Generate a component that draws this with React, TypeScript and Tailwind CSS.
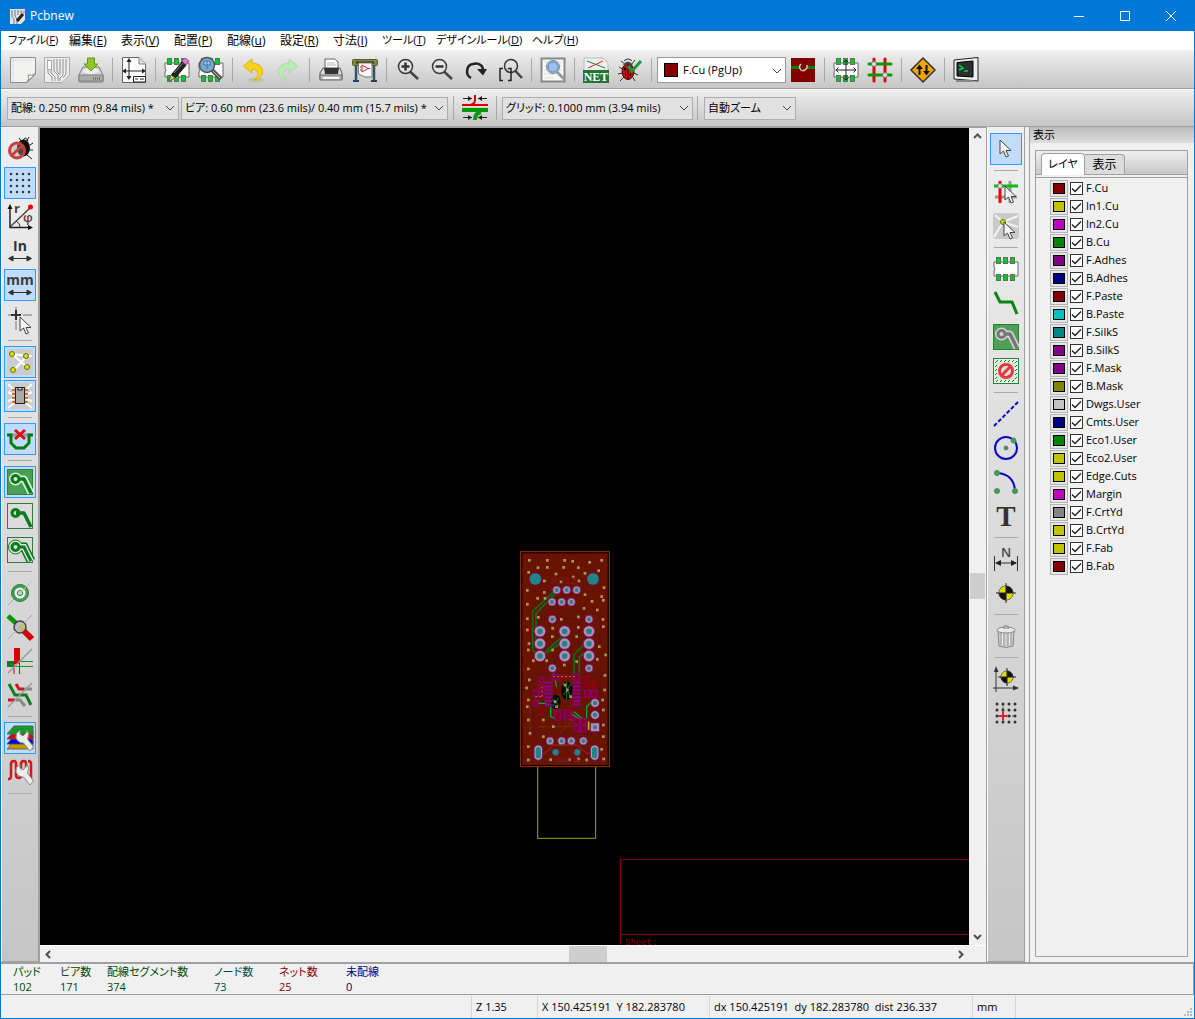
import type { ReactNode } from "react";

const ARROW = "M0 0V14L3.5 11L6 17L8.5 16L6 10.5H11Z";

function Cursor({ x, y }: { x: number; y: number }) {
  return <path d={ARROW} transform={`translate(${x} ${y})`} fill="#f4f4f4" stroke="#444" />;
}

// footprint body with three pads on each side
function Chip() {
  return (
    <>
      <path d="M1 6H25V20H1V15Q3 13 1 11Z" fill="#fff" stroke="#666" />
      {[4, 11, 18].map((x) => (
        <g key={x} fill="#00c832" stroke="#557755">
          <rect x={x - 0.5} y="1.5" width="4" height="6" />
          <rect x={x - 0.5} y="18.5" width="4" height="6" />
        </g>
      ))}
    </>
  );
}

function Target({ x = 13, y = 13, r = 8 }: { x?: number; y?: number; r?: number }) {
  return (
    <g transform={`translate(${x} ${y})`}>
      <circle r={r} fill="#111" stroke="#222" />
      <path d={`M0 0H${-r}A${r} ${r} 0 0 1 0 ${-r}ZM0 0H${r}A${r} ${r} 0 0 1 0 ${r}Z`} fill="#dcdc00" />
      <path d={`M${-r - 3} 0H${r + 3}M0 ${-r - 3}V${r + 3}`} stroke="#222" />
    </g>
  );
}

function Lens({ children }: { children?: ReactNode }) {
  return (
    <>
      <path d="M15 14.500L23 22" stroke="#444" strokeWidth="2.500" />
      <circle cx="10.500" cy="9.500" r="7" fill="#e8e8e8" fillOpacity="0.5" stroke="#383838" strokeWidth="1.500" />
      {children}
    </>
  );
}

function Wrench() {
  return (
    <path
      d="M13 5V9L16 11L19 8L20 5Q23 9 20.500 14L26.500 22L23 26L16.500 18Q11 18 9 13Q8 8 13 5Z"
      fill="#ececec"
      stroke="#888"
    />
  );
}

function ZoneTrack({ bg, halo, core, outline }: { bg: string; halo: string; core: string; outline: string }) {
  return (
    <>
      <rect x="0.5" y="0.5" width="25" height="25" fill={bg} stroke={outline} />
      <path d="M9 10H17L24 24" fill="none" stroke={halo} strokeWidth="7" strokeLinejoin="round" />
      <circle cx="8.500" cy="10" r="6.500" fill={halo} />
      <path d="M9 10H17L24 24" fill="none" stroke={core} strokeWidth="3.500" strokeLinejoin="round" />
      <circle cx="8.500" cy="10" r="3.500" fill={halo} stroke={core} strokeWidth="3" />
    </>
  );
}

const measure = (
  <path d="M2 20.500H24M6 18L1.500 20.500L6 23ZM20 18L24.500 20.500L20 23Z" fill="#333" stroke="#333" />
);

const icons: Record<string, ReactNode> = {
  new: (
    <>
      <path d="M.5 .5H25.500V17L17 25.500H.5Z" fill="#f1f1ef" stroke="#8c8c8c" />
      <path d="M3 1V25M1 3H25" stroke="#ccc" strokeDasharray="1 1" />
      <path d="M25 17L17 25Q20 22 18 18Q22 19 25 17Z" fill="#fff" stroke="#888" />
    </>
  ),
  open: (
    <>
      <path d="M.5 .5H25.500V18L18 25.500H.5Z" fill="#eee" stroke="#aaa" />
      <path d="M4 2V16L8 20V24M7 12V16L11 20V24M10 2V14L14 18V24M13 2V14L15 17M16 2V18M19 2V18L16 21V24M22 2V17L19 21" fill="none" stroke="#8e8e8e" />
      <rect x="3.500" y="3.500" width="4" height="9" fill="#fff" stroke="#aaa" />
    </>
  ),
  save: (
    <>
      <path d="M5 10H21L25 18V24Q25 25 24 25H2Q1 25 1 24V18Z" fill="#d5d5d5" stroke="#777" />
      <path d="M1 18H25V24H1Z" fill="#ababab" stroke="#808080" />
      <path d="M15 21.500H23" stroke="#666" strokeWidth="2" strokeDasharray="1 1" />
      <ellipse cx="13" cy="14" rx="8" ry="3" fill="#eee" />
      <path d="M9.500 1H16.500V7H20L13 14L6 7H9.500Z" fill="#92c42c" stroke="#649a10" />
    </>
  ),
  pagesettings: (
    <>
      <path d="M1.500 .5H18L24.500 7V25.500H1.500Z" fill="#fcfcfc" stroke="#666" />
      <path d="M18 .5V7H24.500" fill="#ddd" stroke="#888" />
      <path d="M8 3V21M3 14H23" stroke="#222" />
      <path d="M8 1L5.500 5H10.500ZM8 23L5.500 19H10.500ZM1 14L5 11.500V16.500ZM25 14L21 11.500V16.500Z" fill="#222" />
      <path d="M12.500 19.500H24.500V25H12.500ZM14 22H17M19 22H23" fill="#fff" stroke="#222" />
    </>
  ),
  modedit: (
    <>
      <Chip />
      <path d="M5 23L8 17L19 4L23 7L12 20Z" fill="#222" stroke="#111" />
      <path d="M5 24L7 18L11 21Z" fill="#f0d060" stroke="#665" />
      <path d="M18 4L21 1L25 4L22 8Z" fill="#d77bc5" stroke="#a0528f" />
      <path d="M10 16L19 6" stroke="#888" />
    </>
  ),
  modview: (
    <>
      <Chip />
      <path d="M14 13L23 22" stroke="#555" strokeWidth="4" />
      <path d="M14 13L22 21" stroke="#bbb" />
      <circle cx="9" cy="8" r="7.500" fill="#79a9cf" stroke="#555" strokeWidth="1.500" />
      <path d="M6 4H12V8H6ZM9 4V12" fill="#a8cbe5" stroke="#3c77a8" />
    </>
  ),
  undo: (
    <>
      <ellipse cx="15" cy="23" rx="8" ry="2" fill="#c4c09e" />
      <path d="M2.500 9L11 2V6C18 6 22.500 11 21.500 16C20.500 20 17 22.500 13 23C16.500 20 17.500 17 16 14.500C15 12.500 13 12 11 12V16Z" fill="#f8d21c" stroke="#dcb008" />
    </>
  ),
  redo: (
    <path d="M22.500 9L14 2V6C7 6 2.500 11 3.500 16C4.500 20 8 22.500 12 23C8.500 20 7.500 17 9 14.500C10 12.500 12 12 14 12V16Z" fill="#bfe8b8" stroke="#a9d8a2" />
  ),
  print: (
    <>
      <path d="M7 12V2H17L20 5V12" fill="#fafafa" stroke="#666" />
      <path d="M9 6H17M9 8H18" stroke="#bbb" />
      <path d="M5 11H22L24 16V22H2V16Z" fill="#ddd" stroke="#555" />
      <path d="M6 11H21L20 17H7Z" fill="#333" />
      <path d="M2 18H24V23H2Z" fill="#b8b8b8" stroke="#666" />
      <path d="M5 21H21" stroke="#f4f4f4" strokeWidth="2" />
    </>
  ),
  plot: (
    <>
      <path d="M4 7V24M22 7V24" stroke="#34506e" strokeWidth="2.500" />
      <path d="M1 24H7M19 24H25" stroke="#24405e" strokeWidth="2" />
      <rect x="0.500" y="2.500" width="25" height="6" rx="1" fill="#858543" stroke="#5d5d2c" />
      <path d="M4 5.500H22" stroke="#34340c" strokeWidth="2" />
      <path d="M6.500 6H20V20H13L6.500 17Z" fill="#f8f8f8" stroke="#777" />
      <path d="M10 8V15L16 11.500ZM8 10H10M8 13H10M16 11.500H18" fill="none" stroke="#c03030" />
    </>
  ),
  zoomin: <Lens><path d="M6.500 9.500H14.500M10.500 5.500V13.500" stroke="#333" strokeWidth="2.500" /></Lens>,
  zoomout: <Lens><path d="M6.500 9.500H14.500" stroke="#333" strokeWidth="2.500" /></Lens>,
  redraw: (
    <>
      <path d="M8 21C2 18 3 8 10 7C16 5 20 9 20 13" fill="none" stroke="#222" strokeWidth="2.500" />
      <path d="M14 12H24L20 18.500Z" fill="#222" />
    </>
  ),
  zoomfit: (
    <>
      <path d="M18 13.500L25 21" stroke="#444" strokeWidth="2.500" />
      <circle cx="14" cy="9" r="6.500" fill="none" stroke="#383838" strokeWidth="1.500" />
      <path d="M6 11.500H3V23.500H6M11 11.500H14V23.500H11" fill="none" stroke="#222" strokeWidth="1.500" />
    </>
  ),
  find: (
    <>
      <rect x="1.500" y="1.500" width="23" height="23" fill="#f8f8f8" stroke="#888" strokeWidth="2" />
      <path d="M4 5H22M4 9H22M4 13H22M4 17H14M4 21H14" stroke="#ddd" />
      <path d="M17 15L24 22" stroke="#999" strokeWidth="3" />
      <circle cx="13" cy="10" r="6.500" fill="#9dbfe8" stroke="#888" />
      <circle cx="13" cy="10" r="5" fill="none" stroke="#5d8fd0" />
    </>
  ),
  netlist: (
    <>
      <path d="M1 1H20L25 6V14H1Z" fill="#eee" stroke="#bbb" />
      <path d="M4 4L22 11" stroke="#208030" />
      <path d="M5 11L20 4" stroke="#c03030" />
      <rect y="13" width="26" height="13" fill="#257532" />
      <text x="13" y="24" textAnchor="middle" fontFamily="Liberation Serif" fontSize="12" fontWeight="bold" fill="#fff">NET</text>
    </>
  ),
  drc: (
    <>
      <path d="M4 4L9 8M18 3L14 8M2 10L7 13M1 17L6 16M3 24L8 19M18 24L15 19M21 18L15 15M7 4Q11 0 15 4" fill="none" stroke="#333" />
      <ellipse cx="11" cy="14.500" rx="6" ry="8" fill="#c00c12" stroke="#500" />
      <path d="M6 8Q11 1 16 8Z" fill="#444" />
      <path d="M11 7V22" stroke="#400" />
      <path d="M7 12H9M8 17H9M13 18H14M13 12H14" stroke="#200" strokeWidth="2.500" />
      <path d="M11 9L15 14L24 4" fill="none" stroke="#169a36" strokeWidth="3" />
    </>
  ),
  layerpair: (
    <>
      <rect x="1" y="1" width="24" height="24" fill="#840000" />
      <path d="M1 10.500H9M17 10.500H25" stroke="#008400" strokeWidth="3" />
      <path d="M11 7Q8 10 11 13Q14 15 17 11V8" fill="none" stroke="#ccc" strokeWidth="1.500" />
    </>
  ),
  footprintmode: (
    <>
      <Chip />
      <path d="M13 3V23M3 13H23M10.500 5.500L13 3L15.500 5.500M10.500 20.500L13 23L15.500 20.500M5.500 10.500L3 13L5.500 15.500M20.500 10.500L23 13L20.500 15.500" fill="none" stroke="#222" />
    </>
  ),
  trackmode: (
    <>
      <path d="M7 2V24M18 2V24" stroke="#e00008" strokeWidth="3" strokeLinecap="round" />
      <path d="M2 7H24M2 18H24" stroke="#009a00" strokeWidth="3" strokeLinecap="round" />
      <circle cx="7" cy="7" r="2.500" fill="#ddd" stroke="#777" />
      <circle cx="18" cy="18" r="2.500" fill="#ddd" stroke="#777" />
    </>
  ),
  autoroute: (
    <>
      <path d="M13 1L25 13L13 25L1 13Z" fill="#f2a60c" stroke="#333" strokeWidth="1.500" strokeLinejoin="round" />
      <path d="M9.500 18V10M16.500 8V16" stroke="#111" strokeWidth="2" />
      <path d="M6 12L9.500 7.500L13 12ZM13 14H20L16.500 18.500Z" fill="#111" />
    </>
  ),
  console: (
    <>
      <path d="M1 3L25 .5V24L1 22Z" fill="#eee" stroke="#222" />
      <path d="M4 5.500L20 4V20L4 19Z" fill="#283030" stroke="#000" />
      <path d="M6 8L10 11L6 13M11 14H15" fill="none" stroke="#00d840" strokeWidth="1.500" />
      <path d="M3 24H20" stroke="#888" strokeWidth="2" />
    </>
  ),
  tracksize: (
    <>
      <path d="M0 10H26" stroke="#e00000" strokeWidth="2" />
      <path d="M13 0V5Q13 9 8 10" fill="none" stroke="#e00000" strokeWidth="2" />
      <path d="M0 15H26" stroke="#009a00" strokeWidth="4" />
      <path d="M19 17Q13 18 13 25" fill="none" stroke="#009a00" strokeWidth="4" />
      <path d="M1 3.500H10M16 3.500H25M1 22.500H10M16 22.500H25" stroke="#222" />
      <path d="M6 1L10 3.500L6 6ZM20 1L16 3.500L20 6ZM6 20L10 22.500L6 25ZM20 20L16 22.500L20 25Z" fill="#222" />
    </>
  ),
  drcoff: (
    <>
      <path d="M12 2L15 6M22 1L19 6M23 9L26 7M22 14H26M20 19L25 23M16 5Q18 -1 21 5" fill="none" stroke="#222" />
      <ellipse cx="16.500" cy="12" rx="6.500" ry="8.500" fill="#111" />
      <circle cx="10" cy="14.500" r="7.500" fill="#999" fillOpacity="0.400" stroke="#c84040" strokeWidth="3" />
      <path d="M5 19L15 10" stroke="#c84040" strokeWidth="3" />
    </>
  ),
  grid: (
    <>
      {[4, 10, 16, 22].map((y) => (
        <path key={y} d={`M4 ${y}h.010M10 ${y}h.010M16 ${y}h.010M22 ${y}h.010`} stroke="#303840" strokeWidth="2.500" strokeLinecap="round" />
      ))}
    </>
  ),
  polar: (
    <>
      <path d="M3 23L24 3" stroke="#544" strokeWidth="1.500" />
      <path d="M3 4V23.500H23" fill="none" stroke="#222" strokeWidth="1.500" />
      <path d="M3 0L.5 5H5.500ZM26 23.500L21 21V26Z" fill="#111" />
      <path d="M9 17Q13 19 13 23" fill="none" stroke="#333" />
      <circle cx="23.500" cy="3" r="2.500" fill="#f00000" />
      <text x="7" y="9" fontFamily="Open Sans" fontSize="13" fontWeight="bold" fill="#54403c">r</text>
      <text x="16" y="18" fontFamily="Open Sans" fontSize="13" fontWeight="600" fill="#54403c">φ</text>
    </>
  ),
  inch: (
    <>
      <text x="13" y="13" textAnchor="middle" fontFamily="Open Sans" fontSize="14" fontWeight="bold" fill="#333">In</text>
      {measure}
    </>
  ),
  mm: (
    <>
      <text x="13" y="13" textAnchor="middle" fontFamily="Open Sans" fontSize="14" fontWeight="bold" fill="#3c3c3c">mm</text>
      {measure}
    </>
  ),
  cross: (
    <>
      <path d="M9 1V5M9 15V24M1 9H4M16 9H25" stroke="#999" strokeWidth="1.500" />
      <path d="M9 4V14M4 9H14" stroke="#333" strokeWidth="2" />
      <Cursor x={13} y={11} />
    </>
  ),
  ratsnest: (
    <>
      <rect width="26" height="26" rx="3" fill="#ccc" />
      <path d="M5 5L20 18M20 7L7 21M5 5L20 7H25" stroke="#fff" strokeWidth="2" />
      {["5 5", "19 7", "6 21", "20 18"].map((p) => (
        <circle key={p} r="2.500" transform={`translate(${p})`} fill="#d8e000" stroke="#6a7010" />
      ))}
    </>
  ),
  modratsnest: (
    <>
      <rect width="26" height="26" rx="3" fill="#ccc" />
      <path d="M7 7L1 1M7 12L1 9M7 16L1 18M7 20L1 25M19 7L25 1M19 12L25 9M19 16L25 18M19 20L25 25" stroke="#fff" strokeWidth="2" />
      <path d="M5 7H21M5 11H21M5 15H21M5 19H21" stroke="#d87030" strokeWidth="2" />
      <rect x="8.500" y="4.500" width="9" height="16" fill="#aaa" stroke="#222" />
      <path d="M11 5V7H15V5" fill="#ddd" stroke="#111" />
    </>
  ),
  autodelete: (
    <>
      <path d="M1 9H25" stroke="#999" strokeWidth="3" />
      <path d="M0 9H4V17L9 22H17L22 17V9H26" fill="none" stroke="#007c10" strokeWidth="3" />
      <path d="M8 4L18 13M18 4L8 13" stroke="#d80c14" strokeWidth="3" />
    </>
  ),
  zones: <ZoneTrack bg="#4a9f57" halo="#d8eedb" core="#087c18" outline="#2b8138" />,
  zonesoff: <ZoneTrack bg="transparent" halo="transparent" core="#087c18" outline="#2b8138" />,
  zonesoutline: (
    <>
      <rect x="0.500" y="0.500" width="25" height="25" fill="none" stroke="#2b8138" />
      <path d="M9 10H17L24 24" fill="none" stroke="#087c18" strokeWidth="9" />
      <circle cx="8.500" cy="10" r="7" fill="#e0e0e0" stroke="#087c18" />
      <path d="M9 10H17L24 24" fill="none" stroke="#e0e0e0" strokeWidth="6" />
      <path d="M9 10H17L24 24" fill="none" stroke="#087c18" strokeWidth="3" />
      <circle cx="8.500" cy="10" r="3.500" fill="#ddd" stroke="#087c18" strokeWidth="3" />
    </>
  ),
  via: (
    <>
      <path d="M1 25L25 1" stroke="#aaa" />
      <circle cx="13" cy="13" r="8.500" fill="#4a9f57" stroke="#2b8138" />
      <path d="M13 13m-3 5A6 6 0 1 1 18 10" fill="none" stroke="#3a9347" />
      <circle cx="13" cy="13" r="4.500" fill="#ddd" stroke="#e8f4e8" strokeWidth="2" />
      <circle cx="13" cy="13" r="2.500" fill="#ddd" stroke="#208030" />
      <path d="M12 14L25 1" stroke="#bbb" />
    </>
  ),
  viaoutline: (
    <>
      <path d="M1 2L10 10" stroke="#009a00" strokeWidth="5" />
      <path d="M15 15L25 25" stroke="#d80008" strokeWidth="6" />
      <circle cx="13" cy="13" r="6" fill="#bbb" fillOpacity="0.900" stroke="#444" strokeWidth="1.500" />
      <path d="M12 14L16 11V16Z" fill="#d8cc00" />
      <path d="M1 25L25 1" stroke="#aaa" />
    </>
  ),
  trackoutline: (
    <>
      <path d="M10 0V16" stroke="#d80008" strokeWidth="6" />
      <path d="M7 16V26M12.500 16V26" stroke="#d80008" />
      <path d="M0 16H7" stroke="#078020" strokeWidth="6" />
      <path d="M13 13.500H26M7 18.500H26" stroke="#209030" />
      <path d="M1 25L25 1" stroke="#999" strokeWidth="1.500" />
    </>
  ),
  highcontrast: (
    <>
      <path d="M9 2L12 7H17M1 18H8" fill="none" stroke="#c81820" strokeWidth="3" />
      <path d="M17 7H25M9 18H13L18 24" stroke="#888" strokeWidth="3" />
      <path d="M2 2L8 13H19L24 23" fill="none" stroke="#107c20" strokeWidth="3" />
      <path d="M1 25L25 1" stroke="#999" strokeWidth="1.500" />
    </>
  ),
  layers: (
    <>
      <path d="M7 16H26V24H0Z" fill="#c89800" stroke="#665" />
      <path d="M7 11H26V19H0Z" fill="#0000d8" stroke="#556" />
      <path d="M7 6H26V14H0Z" fill="#e00010" stroke="#655" />
      <path d="M7 1H26V9H0Z" fill="#159a28" stroke="#565" />
      <Wrench />
    </>
  ),
  microwave: (
    <>
      <path d="M1 20H2Q4 20 4 17V5Q4 2 7 2Q9 2 9 5V16Q9 19 12 19Q14 19 14 16V5Q14 2 17 2Q19 2 19 5V16M24 20V5Q24 2 21 2" fill="none" stroke="#d01818" strokeWidth="2.500" />
      <Wrench />
    </>
  ),
  select: <Cursor x={7} y={4} />,
  highlight: (
    <>
      <path d="M17 2V24M2 18H24" stroke="#999" strokeWidth="3" />
      <path d="M7 2V24" stroke="#f00008" strokeWidth="3" />
      <path d="M1 7H25" stroke="#00c010" strokeWidth="3" />
      <circle cx="7" cy="7" r="2.500" fill="#ddd" stroke="#777" />
      <Cursor x={12} y={7} />
    </>
  ),
  localrats: (
    <>
      <rect width="26" height="26" rx="3" fill="#c9c9c9" />
      <path d="M10 9L2 2M10 9L25 3M10 9L1 24M10 9L25 14" stroke="#f4f4f4" strokeWidth="2" />
      <circle cx="10" cy="9" r="2.500" fill="#d8e000" stroke="#667010" />
      <Cursor x={11} y={9} />
    </>
  ),
  chip: <Chip />,
  track: <path d="M2 2L7 12H19L24 24" fill="none" stroke="#078510" strokeWidth="3" />,
  addzone: <ZoneTrack bg="#4f9f58" halo="#d4d4d4" core="#777" outline="#18872c" />,
  keepout: (
    <>
      <rect x="0.500" y="0.500" width="25" height="25" fill="#e8f4e8" stroke="#2b8138" />
      <path d="M2 5L5 2M2 9L9 2M2 13L13 2M2 17L17 2M2 21L21 2M3 24L24 3M7 24L24 7M11 24L24 11M15 24L24 15M19 24L24 19" stroke="#087c18" />
      <rect x="4" y="4" width="18" height="18" fill="#ddd" />
      <circle cx="13" cy="13" r="6.500" fill="#ddd" stroke="#e03c40" strokeWidth="3" />
      <path d="M9 17L17 9" stroke="#e03c40" strokeWidth="3" />
    </>
  ),
  line: <path d="M1 25L25 1" stroke="#0808d0" strokeWidth="2" strokeDasharray="4 2" />,
  circle: (
    <>
      <circle cx="13" cy="13" r="11" fill="none" stroke="#0808c8" strokeWidth="2" />
      <circle cx="13" cy="13" r="2" fill="#28b038" stroke="#678" />
      <circle cx="20.500" cy="5.500" r="2.500" fill="#28b038" stroke="#678" />
    </>
  ),
  arc: (
    <>
      <path d="M4 4Q21 5 22 22" fill="none" stroke="#0808c8" strokeWidth="2" />
      <circle cx="4" cy="4" r="2.500" fill="#28b038" stroke="#676" />
      <circle cx="4" cy="22" r="2.500" fill="#28b038" stroke="#676" />
      <circle cx="22" cy="22" r="2.500" fill="#28b038" stroke="#676" />
    </>
  ),
  text: <text x="13" y="23" textAnchor="middle" fontFamily="Liberation Serif" fontSize="29" fontWeight="bold" fill="#333">T</text>,
  dimension: (
    <>
      <path d="M1.500 10V25M24.500 10V25M3 17H23" stroke="#333" />
      <path d="M2 17L8 14V20ZM24 17L18 14V20Z" fill="#222" />
      <text x="13" y="11" textAnchor="middle" fontFamily="Open Sans" fontSize="13" fontWeight="600" fill="#444">N</text>
    </>
  ),
  mire: <Target r={7} />,
  trash: (
    <>
      <path d="M5 8H21L20 23Q13 26 6 23Z" fill="#ccc" stroke="#888" />
      <path d="M8 10V22M11 10V23M15 10V23M18 10V22" stroke="#999" />
      <path d="M9.500 10V22M16.500 10V22" stroke="#eee" />
      <ellipse cx="13" cy="7" rx="9" ry="3" fill="#eaeaea" stroke="#888" />
      <path d="M10 5Q13 0 16 5Z" fill="#ddd" stroke="#777" />
    </>
  ),
  offset: (
    <>
      <path d="M3 3V26M0 22H24" stroke="#333" />
      <path d="M3 0L1 6H5.500ZM26 22L20 19.500V24.500Z" fill="#333" />
      <Target x={14} y={11} r={6} />
    </>
  ),
  gridorigin: (
    <>
      <path d="M10 4V22M4 16H22" stroke="#555" strokeDasharray="2 1" />
      {[4, 10, 16, 22].map((y) => (
        <path key={y} d={`M4 ${y}h.010M10 ${y}h.010M16 ${y}h.010M22 ${y}h.010`} stroke="#333" strokeWidth="3" strokeLinecap="round" />
      ))}
      <path d="M10 12V20M6 16H14" stroke="#e02028" strokeWidth="2" />
    </>
  ),
};

function ToolButton({ name, active }: { name: string; active?: boolean }) {
  return (
    <button
      aria-label={name}
      className={`m-px flex size-8 shrink-0 items-center justify-center border ${
        active ? "border-[#3399ff] bg-[#c0dcf8]" : "border-transparent"
      }`}
    >
      <svg className="overflow-visible" width="26" height="26" viewBox="0 0 26 26" fill="none">
        {icons[name]}
      </svg>
    </button>
  );
}

function HSep() {
  return <div className="mx-1 h-6 w-px shrink-0 bg-[#a8a8a8]" />;
}

function TopGroup({ names, last }: { names: string[]; last?: boolean }) {
  return (
    <>
      {names.map((name) => (
        <ToolButton key={name} name={name} />
      ))}
      {!last && <HSep />}
    </>
  );
}

function SideTools({ groups, active, trailing }: { groups: string[][]; active: string[]; trailing?: boolean }) {
  return (
    <>
      {groups.map((group, i) => (
        <div key={group[0]} className="flex flex-col items-center">
          {group.map((name) => (
            <ToolButton key={name} name={name} active={active.includes(name)} />
          ))}
          {(trailing || i < groups.length - 1) && <div className="my-1 h-px w-6 bg-[#a8a8a8]" />}
        </div>
      ))}
    </>
  );
}

function Chevron({ className }: { className: string }) {
  return (
    <svg className={className} width="10" height="6" viewBox="0 0 10 6" fill="none">
      <path d="M1 1L5 5L9 1" stroke="#444" />
    </svg>
  );
}

function Combo({ label, value, className }: { label: string; value: string; className: string }) {
  return (
    <div className={`relative h-[23px] shrink-0 ${className}`}>
      <select
        aria-label={label}
        className="block h-full w-full appearance-none border border-[#adadad] bg-[#e1e1e1] pr-4 pl-[3px] text-[11px] text-black"
      >
        <option>{value}</option>
      </select>
      <Chevron className="pointer-events-none absolute top-2 right-1" />
    </div>
  );
}

const menus = [
  { label: "ファイル", hot: "F", width: "w-[61px] text-[11px]" },
  { label: "編集", hot: "E", width: "w-[52px] text-xs" },
  { label: "表示", hot: "V", width: "w-[53px] text-xs" },
  { label: "配置", hot: "P", width: "w-[53px] text-xs" },
  { label: "配線", hot: "u", width: "w-[53px] text-xs" },
  { label: "設定", hot: "R", width: "w-[53px] text-xs" },
  { label: "寸法", hot: "I", width: "w-[49px] text-xs" },
  { label: "ツール", hot: "T", width: "w-[54px] text-[11px]" },
  { label: "デザインルール", hot: "D", width: "w-[96px] text-[11px]" },
  { label: "ヘルプ", hot: "H", width: "w-[60px] text-[11px]" },
];

const leftGroups = [
  ["drcoff", "grid", "polar", "inch", "mm", "cross"],
  ["ratsnest", "modratsnest"],
  ["autodelete"],
  ["zones", "zonesoff", "zonesoutline"],
  ["via", "viaoutline", "trackoutline", "highcontrast"],
  ["layers", "microwave"],
];

const rightGroups = [
  ["select"],
  ["highlight", "localrats"],
  ["chip", "track", "addzone", "keepout"],
  ["line", "circle", "arc", "text"],
  ["dimension", "mire"],
  ["trash"],
  ["offset", "gridorigin"],
];

const layers = [
  { name: "F.Cu", color: "bg-[#840000]" },
  { name: "In1.Cu", color: "bg-[#c2c200]" },
  { name: "In2.Cu", color: "bg-[#c200c2]" },
  { name: "B.Cu", color: "bg-[#008400]" },
  { name: "F.Adhes", color: "bg-[#840084]" },
  { name: "B.Adhes", color: "bg-[#000084]" },
  { name: "F.Paste", color: "bg-[#840000]" },
  { name: "B.Paste", color: "bg-[#00c2c2]" },
  { name: "F.SilkS", color: "bg-[#008484]" },
  { name: "B.SilkS", color: "bg-[#840084]" },
  { name: "F.Mask", color: "bg-[#840084]" },
  { name: "B.Mask", color: "bg-[#848400]" },
  { name: "Dwgs.User", color: "bg-[#c2c2c2]" },
  { name: "Cmts.User", color: "bg-[#000084]" },
  { name: "Eco1.User", color: "bg-[#008400]" },
  { name: "Eco2.User", color: "bg-[#c2c200]" },
  { name: "Edge.Cuts", color: "bg-[#c2c200]" },
  { name: "Margin", color: "bg-[#c200c2]" },
  { name: "F.CrtYd", color: "bg-[#848484]" },
  { name: "B.CrtYd", color: "bg-[#c2c200]" },
  { name: "F.Fab", color: "bg-[#c2c200]" },
  { name: "B.Fab", color: "bg-[#840000]" },
];

const stats = [
  { label: "パッド", value: "102", style: "w-[47px] text-[#004800]" },
  { label: "ビア数", value: "171", style: "w-[47px] text-[#004800]" },
  { label: "配線セグメント数", value: "374", style: "w-[107px] text-[#004800]" },
  { label: "ノード数", value: "73", style: "w-[65px] text-[#004848]" },
  { label: "ネット数", value: "25", style: "w-[67px] text-[#840000]" },
  { label: "未配線", value: "0", style: "w-[67px] text-[#000084]" },
];

const vias = [
  [58, 61], [112, 61], [164, 61], [188, 64], [239, 67], [275, 61], [56, 97], [84, 83], [112, 82], [161, 82],
  [205, 83], [138, 102], [190, 111], [225, 100], [266, 92], [103, 123], [153, 126], [207, 123], [282, 143],
  [52, 151], [103, 157], [225, 164], [275, 170], [83, 175], [105, 175], [246, 184], [280, 181], [52, 193],
  [222, 205], [52, 236], [262, 210], [279, 238], [85, 232], [154, 238], [205, 231], [280, 260], [52, 270],
  [128, 265], [205, 262], [57, 311], [127, 290], [200, 290], [268, 320], [287, 345], [55, 330], [128, 330],
  [55, 387], [70, 362], [110, 362], [163, 375], [200, 365], [262, 358], [285, 406], [58, 420], [50, 444],
  [55, 480], [284, 450], [278, 480], [52, 500], [280, 510], [55, 540], [100, 540], [130, 560], [60, 580],
  [100, 590], [280, 555], [280, 590], [55, 620], [55, 660], [122, 659], [178, 659], [205, 657], [230, 660],
  [275, 628], [281, 657], [172, 450], [182, 470], [135, 485], [140, 500], [165, 435],
];

const pads = [
  [140, 150, 12], [170, 150, 12], [200, 150, 12], [126, 186, 12], [155, 186, 12], [184, 186, 12],
  [127, 238, 12], [237, 238, 12], [90, 274, 17], [164, 274, 17], [237, 274, 17], [90, 311, 17], [164, 311, 17],
  [237, 311, 17], [90, 348, 17], [164, 348, 17], [237, 348, 17], [127, 385, 12], [237, 385, 12],
  [255, 489, 13], [255, 525, 13], [120, 603, 12], [155, 603, 12], [184, 603, 12], [220, 603, 12],
];

const smd = [
  [70, 450, 15, 18], [70, 480, 15, 18], [88, 412, 14, 14], [88, 434, 14, 14], [88, 456, 14, 14],
  [134, 510, 18, 30], [164, 510, 22, 30], [192, 535, 16, 18], [212, 535, 16, 18], [192, 558, 16, 18],
  [212, 558, 16, 18], [224, 450, 16, 22], [244, 452, 16, 20], [126, 404, 20, 16], [188, 404, 20, 16],
];

function Board() {
  return (
    <svg className="absolute inset-0 h-full w-full" fill="none">
      <g transform="translate(470 412) scale(0.3333)">
        <rect x="83" y="672" width="174" height="223" stroke="#a0a000" strokeWidth="3" />
        <rect x="32" y="35" width="266" height="645" fill="#100000" stroke="#983400" strokeWidth="3" />
        <rect x="37" y="40" width="256" height="635" fill="#6a1400" />
        <g stroke="#5c1020" strokeWidth="3">
          <path d="M75 45H250V155H75ZM110 155V200M90 290V235L120 205H180L205 240V380M70 235H240M110 385L150 350L180 385H240M140 165V200M215 190L235 240M270 230V330M70 400H270V580H70Z" />
          <path d="M86 560H230M60 500V590M150 580L190 540" stroke="#703000" />
          <path d="M75 640H105L130 615H200L230 640H260" stroke="#9c3600" />
        </g>
        <g stroke="#007020" strokeWidth="5">
          <path d="M135 152L68 214V330L88 350M135 162L78 220V325M164 284L90 350M164 300L110 340M224 311L192 345V400M237 330L208 350V400" />
          <path d="M130 400L140 440M85 490H110M122 500V530L145 540M175 515L205 535M230 535V500L250 480M192 515L215 535" stroke="#10a040" strokeWidth="4" />
        </g>
        <ellipse cx="171" cy="452" rx="17" ry="28" fill="#020a02" />
        <ellipse cx="137" cy="486" rx="15" ry="22" fill="#020a02" />
        <path d="M160 430L182 470M185 430L160 465M127 475L148 498M146 473L128 500M170 424V480" stroke="#007c28" strokeWidth="3" />
        <g stroke="#90007c" strokeWidth="3" fill="#800028">
          {smd.map(([x, y, w, h]) => (
            <rect key={`${x}-${y}`} x={x} y={y} width={w} height={h} />
          ))}
          {[428, 439, 450, 461, 472, 483, 494].map((y) => (
            <path key={y} d={`M104 ${y}H128M188 ${y}H212`} stroke="#8c008c" strokeWidth="7" />
          ))}
        </g>
        <path d="M150 404H175V418H150ZM220 404H236V420H220ZM244 425H258V445H244ZM222 424H238V445H222ZM88 510H102V526H88Z" fill="#8c0018" />
        <path d="M130 410H200M96 440V476M76 470H100" stroke="#b0a000" strokeWidth="3" strokeDasharray="5 7" />
        <path d="M236 545V570" stroke="#c0b000" strokeWidth="5" />
        {vias.map(([x, y]) => (
          <g key={`${x}-${y}`}>
            <rect x={x - 4} y={y - 4} width="8" height="8" fill="#b09484" />
            <rect x={x - 2} y={y - 1} width="4" height="4" fill="#a0a018" />
          </g>
        ))}
        {pads.map(([x, y, r]) => (
          <g key={`${x}-${y}`}>
            <circle cx={x} cy={y} r={r} fill="#b090b0" stroke="#840084" strokeWidth="2" />
            <circle cx={x} cy={y} r={r / 2} fill="#208488" />
          </g>
        ))}
        <rect x="242" y="549" width="26" height="26" fill="#b090b0" stroke="#840084" strokeWidth="2" />
        <circle cx="255" cy="562" r="6" fill="#208488" />
        {[76, 249].map((x) => (
          <circle key={x} cx={x} cy="117" r="18" fill="#208488" stroke="#840084" strokeWidth="3" strokeDasharray="4 4" />
        ))}
        {[137, 202].map((x) => (
          <circle key={x} cx={x} cy="637" r="10" fill="#208488" stroke="#840084" strokeWidth="3" strokeDasharray="4 4" />
        ))}
        {[85, 254].map((x) => (
          <g key={x}>
            <rect x={x - 13} y="615" width="26" height="46" rx="13" fill="#b0a0b0" stroke="#840084" strokeWidth="3" />
            <rect x={x - 8} y="621" width="16" height="34" rx="8" fill="#208488" />
          </g>
        ))}
        <g fill="#7c1828" fontFamily="Liberation Mono">
          <text x="125" y="132" fontSize="32">RJ12</text>
          <text x="136" y="668" fontSize="24">USB_A</text>
          <text x="145" y="562" fontSize="22">C2</text>
        </g>
      </g>
      <path d="M580.500 820V731.500H2000M580.500 806.500H2000" stroke="#840000" />
      <text x="585" y="817" fontFamily="Liberation Mono" fontSize="9" fill="#940000">Sheet:</text>
    </svg>
  );
}

function ScrollArrow({ d }: { d: string }) {
  return (
    <button aria-label="scroll" className="flex size-[17px] shrink-0 items-center justify-center">
      <svg width="9" height="9" viewBox="0 0 9 9" fill="none">
        <path d={d} stroke="#505050" strokeWidth="2" />
      </svg>
    </button>
  );
}

export default function App() {
  return (
    <div className="flex h-screen flex-col overflow-hidden border border-[#0078d7] bg-[#f0f0f0] font-['Open_Sans','Noto_Sans_CJK_JP',sans-serif] text-[11px] whitespace-nowrap text-black [font-feature-settings:'palt']">
      <header className="flex h-[30px] shrink-0 items-center bg-[#0078d7] pl-2 text-white">
        <svg width="17" height="17" viewBox="0 0 17 17" fill="none">
          <path d="M1 1H16V12L12 16H1Z" fill="#e4e4e4" />
          <path d="M3 2V9L5 11V16M6 2V8L8 11V16M9 2V7M12 2V5" stroke="#777" />
          <path d="M8 13L14 6" stroke="#222" strokeWidth="3" />
          <path d="M14 5L16 3" stroke="#d77bc5" strokeWidth="2" />
        </svg>
        <h1 className="ml-1 text-xs">Pcbnew</h1>
        <div className="ml-auto flex">
          {["M0 5.500H10", "M.5 .5H9.500V9.500H.5Z", "M0 0L10 10M10 0L0 10"].map((d) => (
            <button key={d} aria-label="window" className="flex h-[30px] w-[46px] items-center justify-center">
              <svg width="10" height="10" viewBox="0 0 10 10" fill="none">
                <path d={d} stroke="#fff" />
              </svg>
            </button>
          ))}
        </div>
      </header>

      <nav className="flex h-[21px] shrink-0 border-b-2 border-[#f0f0f0] bg-white">
        {menus.map(({ label, hot, width }) => (
          <button key={label} className={`${width} shrink-0 pl-[7px] text-left`}>
            {label}(<u>{hot}</u>)
          </button>
        ))}
      </nav>

      <div className="flex h-[37px] shrink-0 items-center border-b border-[#a0a0a0] bg-linear-to-b from-[#ededed] to-[#c6c6c6] pl-[5px]">
        <TopGroup names={["new", "open", "save"]} />
        <TopGroup names={["pagesettings"]} />
        <TopGroup names={["modedit", "modview"]} />
        <TopGroup names={["undo", "redo"]} />
        <TopGroup names={["print", "plot"]} />
        <TopGroup names={["zoomin", "zoomout", "redraw", "zoomfit"]} />
        <TopGroup names={["find"]} />
        <TopGroup names={["netlist", "drc"]} />
        <div className="relative ml-px h-[26px] w-[129px] shrink-0">
          <select
            aria-label="layer"
            className="block h-full w-full appearance-none border border-[#999] bg-white pl-[25px] text-[11px] text-black"
          >
            <option>F.Cu (PgUp)</option>
          </select>
          <span className="pointer-events-none absolute top-[6px] left-[7px] size-[14px] border border-black bg-[#840000]" />
          <Chevron className="pointer-events-none absolute top-[11px] right-1" />
        </div>
        <TopGroup names={["layerpair"]} />
        <TopGroup names={["footprintmode", "trackmode"]} />
        <TopGroup names={["autoroute"]} />
        <TopGroup names={["console"]} last />
      </div>

      <div className="flex h-[38px] shrink-0 items-center border-t border-b border-t-white border-b-[#a0a0a0] bg-linear-to-b from-[#ededed] to-[#c6c6c6] pl-[6px]">
        <Combo label="track" value="配線: 0.250 mm (9.84 mils) *" className="w-[172px]" />
        <Combo label="via" value="ビア: 0.60 mm (23.6 mils)/ 0.40 mm (15.7 mils) *" className="ml-0.5 w-[267px]" />
        <div className="ml-px"><HSep /></div>
        <ToolButton name="tracksize" />
        <HSep />
        <Combo label="grid" value="グリッド: 0.1000 mm (3.94 mils)" className="ml-px w-[191px]" />
        <HSep />
        <Combo label="zoom" value="自動ズーム" className="ml-0.5 w-[92px]" />
      </div>

      <div className="flex min-h-0 flex-1">
        <aside className="w-[39px] shrink-0 border-r-2 border-b border-l border-r-[#a0a0a0] border-b-[#a0a0a0] border-l-white bg-linear-to-b from-[#efefef] to-[#c5c5c5] pt-[5px]">
          <SideTools
            groups={leftGroups}
            active={["grid", "mm", "ratsnest", "modratsnest", "autodelete", "zones", "layers"]}
            trailing
          />
        </aside>

        <main className="flex min-w-0 flex-1 flex-col border-t border-r border-[#a0a0a0]">
          <div className="flex min-h-0 flex-1">
            <div className="relative min-w-0 flex-1 overflow-hidden bg-black">
              <Board />
            </div>
            <div className="flex w-[17px] shrink-0 flex-col">
              <ScrollArrow d="M1 6L4.500 2.500L8 6" />
              <div className="flex-[428]" />
              <div className="mx-px h-[26px] bg-[#cdcdcd]" />
              <div className="flex-[329]" />
              <ScrollArrow d="M1 3L4.500 6.500L8 3" />
            </div>
          </div>
          <div className="flex h-[17px] shrink-0 border-t border-white pr-[17px]">
            <ScrollArrow d="M6 1L2.500 4.500L6 8" />
            <div className="flex-[512]" />
            <div className="w-[38px] bg-[#cdcdcd]" />
            <div className="flex-[345]" />
            <ScrollArrow d="M3 1L6.500 4.500L3 8" />
          </div>
        </main>

        <aside className="w-[38px] shrink-0 border-r border-b border-l border-r-[#a0a0a0] border-b-[#a0a0a0] border-l-white bg-linear-to-b from-[#efefef] to-[#c5c5c5] pt-[5px]">
          <SideTools groups={rightGroups} active={["select"]} />
        </aside>

        <section className="ml-1 flex w-[165px] shrink-0 flex-col border-l border-[#a0a0a0]">
          <h2 className="h-4 bg-linear-to-b from-[#bcbcbc] to-[#dedede] pl-[3px] text-[11px] leading-4">表示</h2>
          <div className="mt-[7px] mr-[6px] mb-[5px] ml-[5px] flex flex-1 flex-col border border-[#a0a0a0]">
            <div className="flex h-6 items-end border-b border-[#a0a0a0] bg-linear-to-b from-[#f0f0f0] to-[#c8c8c8] pl-[5px] text-[11px]">
              <button className="-mb-px h-[22px] w-11 rounded-t-sm border border-b-0 border-[#a0a0a0] bg-white">レイヤ</button>
              <button className="h-5 w-10 rounded-tr-sm border border-b-0 border-l-0 border-[#a0a0a0] bg-[#dcdcdc] text-xs">表示</button>
            </div>
            <div className="mt-0.5 flex-1 border-t border-[#a0a0a0] pt-px pl-[14px]">
              {layers.map(({ name, color }) => (
                <div key={name} className="flex h-[18px] items-center">
                  <button aria-label={`${name} color`} className="mr-0.5 flex h-[17px] w-[18px] items-center justify-center border border-[#b4b4b4] bg-[#e6e6e6]">
                    <span className={`h-[11px] w-3 border border-black ${color}`} />
                  </button>
                  <label className="flex items-center">
                    <span className="mr-[3px] grid size-[13px] place-items-center">
                      <input type="checkbox" defaultChecked className="peer col-start-1 row-start-1 size-[13px] appearance-none border border-[#333] bg-white" />
                      <svg className="pointer-events-none invisible col-start-1 row-start-1 peer-checked:visible" width="11" height="11" viewBox="0 0 11 11" fill="none">
                        <path d="M1 5.500L4 8.500L10 2.500" stroke="#222" strokeWidth="1.400" />
                      </svg>
                    </span>
                    {name}
                  </label>
                </div>
              ))}
            </div>
          </div>
        </section>
      </div>

      <dl className="flex h-[33px] shrink-0 border-t-2 border-r border-b border-[#a0a0a0] pl-3 leading-[15px]">
        {stats.map(({ label, value, style }) => (
          <div key={label} className={`shrink-0 ${style}`}>
            <dt>{label}</dt>
            <dd>{value}</dd>
          </div>
        ))}
      </dl>

      <footer className="flex h-[23px] shrink-0 pt-px leading-[22px] whitespace-pre">
        <div className="flex-1" />
        <div className="w-[66px] border-l border-[#d7d7d7] pl-1">Z 1.35</div>
        <div className="w-[172px] border-l border-[#d7d7d7] pl-1">{"X 150.425191  Y 182.283780"}</div>
        <div className="w-[263px] border-l border-[#d7d7d7] pl-1">{"dx 150.425191  dy 182.283780  dist 236.337"}</div>
        <div className="w-[43px] border-l border-[#d7d7d7] pl-1">mm</div>
        <div className="flex w-[179px] items-end justify-end border-l border-[#d7d7d7] p-0.5">
          <svg width="8" height="8" viewBox="0 0 8 8">
            <path d="M6 0h2v2h-2zM3 3h2v2h-2zM6 3h2v2h-2zM0 6h2v2h-2zM3 6h2v2h-2zM6 6h2v2h-2z" fill="#bbb" />
          </svg>
        </div>
      </footer>
    </div>
  );
}
